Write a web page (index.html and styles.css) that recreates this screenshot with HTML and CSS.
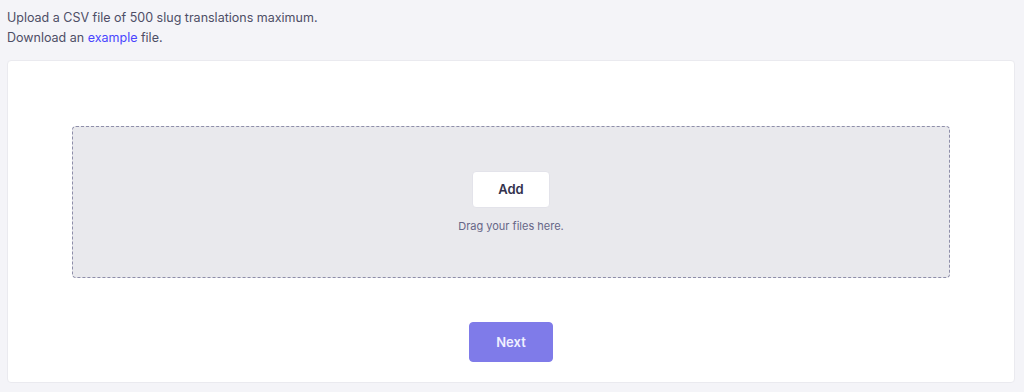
FILE: index.html
```html
<!DOCTYPE html>
<html>
<head>
<meta charset="utf-8">
<link rel="stylesheet" href="styles.css">
</head>
<body>
<div class="page">
  <div class="intro">
    <p>Upload a CSV file of 500 slug translations maximum.</p>
    <p>Download an <a href="#" class="link">example</a> file.</p>
  </div>
  <div class="card">
    <div class="dropzone">
      <button class="add">Add</button>
      <span class="hint">Drag your files here.</span>
    </div>
    <div class="actions">
      <button class="next">Next</button>
    </div>
  </div>
</div>
</body>
</html>
```

FILE: styles.css
```css
* { box-sizing: border-box; }
html, body {
  margin: 0;
  padding: 0;
  background: #f4f4f8;
  font-family: Inter, "Noto Sans", sans-serif;
}
.page {
  padding: 8px 9px 0 7px;
}
.intro p {
  margin: 0;
  font-size: 12.5px;
  line-height: 19.5px;
  color: #4e4e66;
}
.link {
  color: #4945ff;
  text-decoration: none;
}
.card {
  margin-top: 13px;
  background: #ffffff;
  border: 1px solid #eaeaef;
  border-radius: 4px;
  padding: 65px 64px 20px 64px;
  display: flex;
  flex-direction: column;
}
.dropzone {
  height: 152px;
  background: #e9e9ed;
  border: 1px dashed #8e8ea9;
  border-radius: 4px;
  display: flex;
  flex-direction: column;
  align-items: center;
  justify-content: center;
  gap: 10px;
}
.add {
  width: 78px;
  height: 37px;
  background: #ffffff;
  border: 1px solid #e3e3ea;
  border-radius: 4px;
  font-family: inherit;
  font-size: 13px;
  font-weight: 600;
  color: #32324d;
}
.hint {
  font-size: 11px;
  line-height: 16px;
  color: #666687;
}
.actions {
  display: flex;
  justify-content: center;
  margin-top: 44px;
}
.next {
  width: 84px;
  height: 40px;
  background: #7f7be9;
  border: 1px solid #7f7be9;
  border-radius: 4px;
  font-family: inherit;
  font-size: 13px;
  font-weight: 600;
  color: #f0f0ff;
}
```
